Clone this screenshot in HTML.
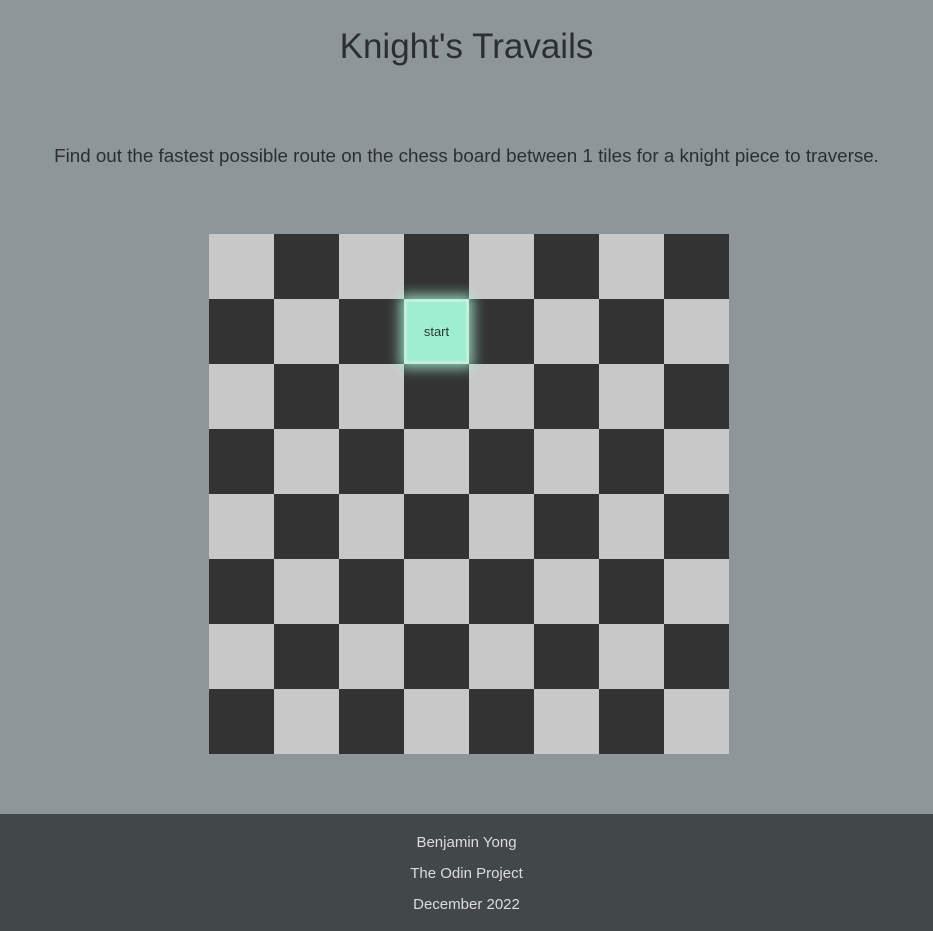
<!DOCTYPE html>
<html><head><style>
html,body{margin:0;padding:0}
body{width:933px;height:931px;background:#8e9699;font-family:"Liberation Sans",sans-serif;color:#2b2f31;position:relative;overflow:hidden}
h1{position:absolute;top:26px;left:0;width:933px;margin:0;text-align:center;font-weight:normal;font-size:35px;line-height:42px}
p.d{position:absolute;top:144px;left:0;width:933px;margin:0;text-align:center;font-size:18.8px;line-height:24px}
.board{position:absolute;left:209px;top:234px;width:520px;height:520px;display:grid;grid-template-columns:repeat(8,65px);grid-template-rows:repeat(8,65px)}
.l{background:#c8c8c8}.k{background:#333}
.s{position:absolute;left:404px;top:299px;width:59px;height:59px;background:#a0eed0;border:3px solid #c3f0de;box-shadow:0 0 12px 4px rgba(170,245,215,.8);font-size:13px;display:flex;align-items:center;justify-content:center;color:#2b3a35}
footer{position:absolute;left:0;top:814px;width:933px;height:117px;background:#42474a;color:#dcdcdc;font-size:15px;text-align:center}
footer div{position:absolute;left:0;width:933px}
</style></head><body>
<h1>Knight's Travails</h1>
<p class="d">Find out the fastest possible route on the chess board between 1 tiles for a knight piece to traverse.</p>
<div class="board">
<script>
for(let r=0;r<8;r++)for(let c=0;c<8;c++)document.write('<div class="'+((r+c)%2?'k':'l')+'"></div>');
</script>
</div>
<div class="s">start</div>
<footer>
<div style="top:20px">Benjamin Yong</div>
<div style="top:51px">The Odin Project</div>
<div style="top:82px">December 2022</div>
</footer>
</body></html>
